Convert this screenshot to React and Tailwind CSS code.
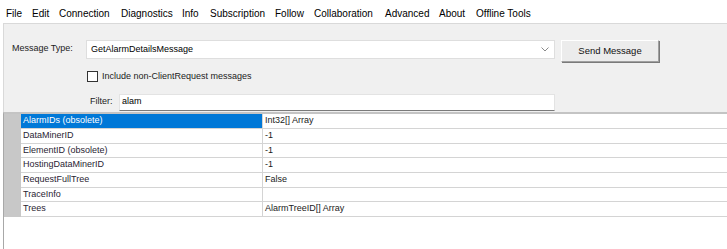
import React from "react";

const menu = [
  ["File", 26],
  ["Edit", 27],
  ["Connection", 62],
  ["Diagnostics", 61],
  ["Info", 28],
  ["Subscription", 65],
  ["Follow", 39],
  ["Collaboration", 71],
  ["Advanced", 54],
  ["About", 37],
  ["Offline Tools", 80],
];

const rows = [
  ["AlarmIDs (obsolete)", "Int32[] Array", "h-[15px]", true],
  ["DataMinerID", "-1", "h-[15px]", false],
  ["ElementID (obsolete)", "-1", "h-[14px]", false],
  ["HostingDataMinerID", "-1", "h-[15px]", false],
  ["RequestFullTree", "False", "h-[15px]", false],
  ["TraceInfo", "", "h-[14px]", false],
  ["Trees", "AlarmTreeID[] Array", "h-[15px]", false],
];

export default function App() {
  return (
    <div className="w-[727px] h-[249px] bg-white overflow-hidden font-['Liberation_Sans',Arial,sans-serif] text-black flex flex-col">
      {/* Menu bar */}
      <div className="h-[23px] flex items-center pl-[6px] pt-[3px] text-[10px] bg-white shrink-0">
        {menu.map(([t, w]) => (
          <span key={t} style={{ width: w }} className="shrink-0 whitespace-nowrap">
            {t}
          </span>
        ))}
      </div>

      {/* Control panel */}
      <div className="ml-[3px] h-[89px] shrink-0 bg-[#f0f0f0] border-t border-l border-[#d9d9d9] text-[9px]">
        <div className="mt-[16px] flex items-start">
          <div className="w-[82px] pl-[8px] leading-[17px] text-[#222]">Message Type:</div>
          <div className="w-[469px] h-[19px] bg-white border border-[#dedede] flex items-center pl-[4px] pr-[4px]">
            <span className="flex-1">GetAlarmDetailsMessage</span>
            <svg width="8" height="5" viewBox="0 0 8 5" className="mr-[1px]">
              <path d="M0.5 0.5 L4 4 L7.5 0.5" fill="none" stroke="#8a8a8a" strokeWidth="1" />
            </svg>
          </div>
          <div className="ml-[6px] w-[98px] h-[22px] bg-[#ececec] border border-t-white border-l-white border-r-[#a0a0a0] border-b-[#a0a0a0] shadow-[1px_1px_0_#7a7a7a] flex items-center justify-center text-[9.5px] text-[#111]">
            Send Message
          </div>
        </div>
        <div className="mt-[8px] flex items-center pl-[83px]">
          <div className="w-[11px] h-[11px] bg-white border border-[#333]" />
          <span className="ml-[4px] text-[#222]">Include non-ClientRequest messages</span>
        </div>
        <div className="mt-[10px] flex items-center pl-[86px]">
          <span className="w-[29px] text-[#222]">Filter:</span>
          <div className="w-[436px] h-[17px] bg-white border border-[#e3e3e3] border-b-[#7a7a7a] flex items-center pl-[2px]">
            alam
          </div>
        </div>
      </div>

      {/* Property grid */}
      <div className="ml-[3px] flex-1 border-l border-[#a8a8a8] border-t-2 border-t-[#c4c4c4] bg-white text-[9px] flex items-start">
        <div className="w-[17px] h-[103px] bg-[#c8c8c8] shrink-0" />
        <div className="flex-1 flex flex-col">
          {rows.map(([n, v, h, sel]) => (
            <div key={n} className={`${h} flex border-b border-[#d4d4d4]`}>
              <div
                className={`w-[242px] shrink-0 pl-[2px] flex items-center border-r border-[#d4d4d4] ${
                  sel ? "bg-[#0078d7] text-white" : "text-[#2a1d33]"
                }`}
              >
                {n}
              </div>
              <div className="flex-1 pl-[2px] flex items-center text-[#1a1a1a]">{v}</div>
            </div>
          ))}
        </div>
      </div>
    </div>
  );
}
